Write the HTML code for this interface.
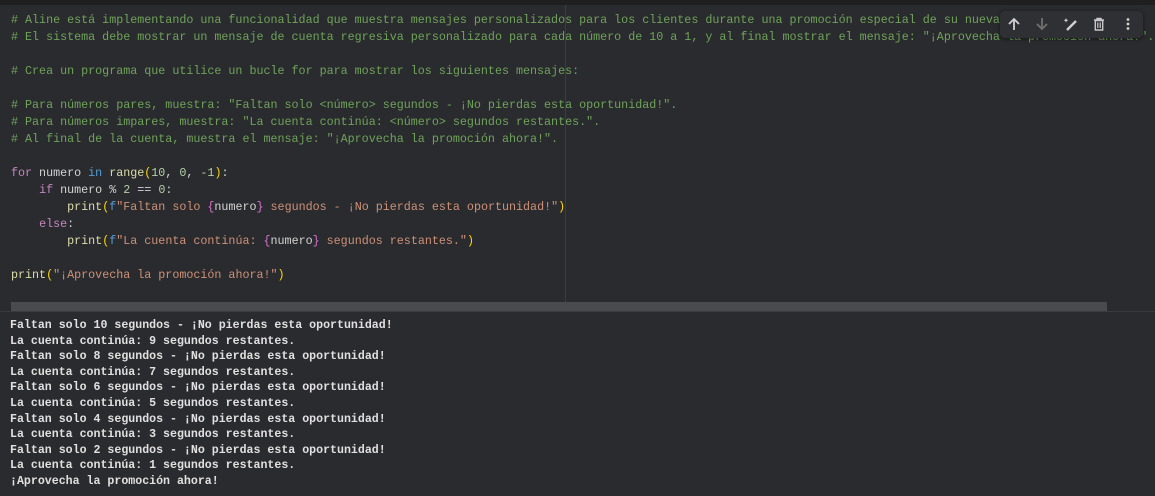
<!DOCTYPE html>
<html><head><meta charset="utf-8"><style>
html,body{margin:0;padding:0;}
body{width:1155px;height:496px;background:#2a2b2e;position:relative;overflow:hidden;font-family:"Liberation Mono",monospace;}
.top{position:absolute;left:0;top:0;width:1155px;height:5px;background:#1f1f20;}
.code{position:absolute;left:11px;top:12px;font-size:11.7px;line-height:17px;white-space:pre;color:#d4d4d4;}
.c{color:#6fa35a}.k{color:#c586c0}.b{color:#569cd6}.f{color:#dcdcaa}.p{color:#ffd700}.n{color:#b5cea8}.s{color:#ce9178}.br{color:#da70d6}
.ruler{position:absolute;left:565px;top:5px;width:1px;height:306px;background:#3c3d40;}
.scroll{position:absolute;left:11px;top:302px;width:1096px;height:9px;background:#4a4b4e;}
.sep{position:absolute;left:0;top:311px;width:1155px;height:1px;background:#3a3b3e;}
.out{position:absolute;left:10px;top:318px;font-size:11.6px;line-height:15.6px;white-space:pre;color:#e0e0e0;font-weight:bold;}
.tb{position:absolute;left:1000px;top:11px;width:143px;height:27px;background:#2f3033;border-radius:5px;box-shadow:0 1px 4px rgba(0,0,0,.5);}
.tb svg{position:absolute;top:6px;}
</style></head><body>
<div class="top"></div>
<div class="code"><span class="c"># Aline está implementando una funcionalidad que muestra mensajes personalizados para los clientes durante una promoción especial de su nueva l
# El sistema debe mostrar un mensaje de cuenta regresiva personalizado para cada número de 10 a 1, y al final mostrar el mensaje: "¡Aprovecha la promoción ahora!".

# Crea un programa que utilice un bucle for para mostrar los siguientes mensajes:

# Para números pares, muestra: "Faltan solo &lt;número&gt; segundos - ¡No pierdas esta oportunidad!".
# Para números impares, muestra: "La cuenta continúa: &lt;número&gt; segundos restantes.".
# Al final de la cuenta, muestra el mensaje: "¡Aprovecha la promoción ahora!".</span>

<span class="k">for</span> numero <span class="b">in</span> <span class="f">range</span><span class="p">(</span><span class="n">10</span>, <span class="n">0</span>, <span class="n">-1</span><span class="p">)</span>:
    <span class="k">if</span> numero % <span class="n">2</span> == <span class="n">0</span>:
        <span class="f">print</span><span class="p">(</span><span class="b">f</span><span class="s">"Faltan solo </span><span class="br">{</span>numero<span class="br">}</span><span class="s"> segundos - ¡No pierdas esta oportunidad!"</span><span class="p">)</span>
    <span class="k">else</span>:
        <span class="f">print</span><span class="p">(</span><span class="b">f</span><span class="s">"La cuenta continúa: </span><span class="br">{</span>numero<span class="br">}</span><span class="s"> segundos restantes."</span><span class="p">)</span>

<span class="f">print</span><span class="p">(</span><span class="s">"¡Aprovecha la promoción ahora!"</span><span class="p">)</span></div>
<div class="ruler"></div>
<div class="scroll"></div>
<div class="sep"></div>
<div class="tb">
<svg style="left:7px" width="14" height="14" viewBox="0 0 14 14"><path d="M7 13V2M2 7l5-5 5 5" stroke="#d0d0d0" stroke-width="1.8" fill="none"/></svg>
<svg style="left:35px" width="14" height="14" viewBox="0 0 14 14"><path d="M7 1v11M2 7l5 5 5-5" stroke="#707070" stroke-width="1.8" fill="none"/></svg>
<svg style="left:63px" width="16" height="14" viewBox="0 0 16 14"><path d="M4 13L13 4" stroke="#d0d0d0" stroke-width="2.4" fill="none"/><path d="M3 1l.7 1.6L5.3 3.3 3.7 4 3 5.6 2.3 4 .7 3.3 2.3 2.6z" fill="#d0d0d0"/></svg>
<svg style="left:92px" width="14" height="14" viewBox="0 0 14 14"><path d="M2 3h10M5 3V1.5h4V3M3.3 3.5h7.4V13H3.3z" stroke="#c8c8c8" stroke-width="1.4" fill="none"/><path d="M5.8 5.5v5.5M8.2 5.5v5.5" stroke="#c8c8c8" stroke-width="1.2"/></svg>
<svg style="left:121px" width="14" height="14" viewBox="0 0 14 14"><circle cx="7" cy="2.5" r="1.4" fill="#d0d0d0"/><circle cx="7" cy="7" r="1.4" fill="#d0d0d0"/><circle cx="7" cy="11.5" r="1.4" fill="#d0d0d0"/></svg>
</div>
<div class="out">Faltan solo 10 segundos - ¡No pierdas esta oportunidad!
La cuenta continúa: 9 segundos restantes.
Faltan solo 8 segundos - ¡No pierdas esta oportunidad!
La cuenta continúa: 7 segundos restantes.
Faltan solo 6 segundos - ¡No pierdas esta oportunidad!
La cuenta continúa: 5 segundos restantes.
Faltan solo 4 segundos - ¡No pierdas esta oportunidad!
La cuenta continúa: 3 segundos restantes.
Faltan solo 2 segundos - ¡No pierdas esta oportunidad!
La cuenta continúa: 1 segundos restantes.
¡Aprovecha la promoción ahora!</div>
</body></html>
